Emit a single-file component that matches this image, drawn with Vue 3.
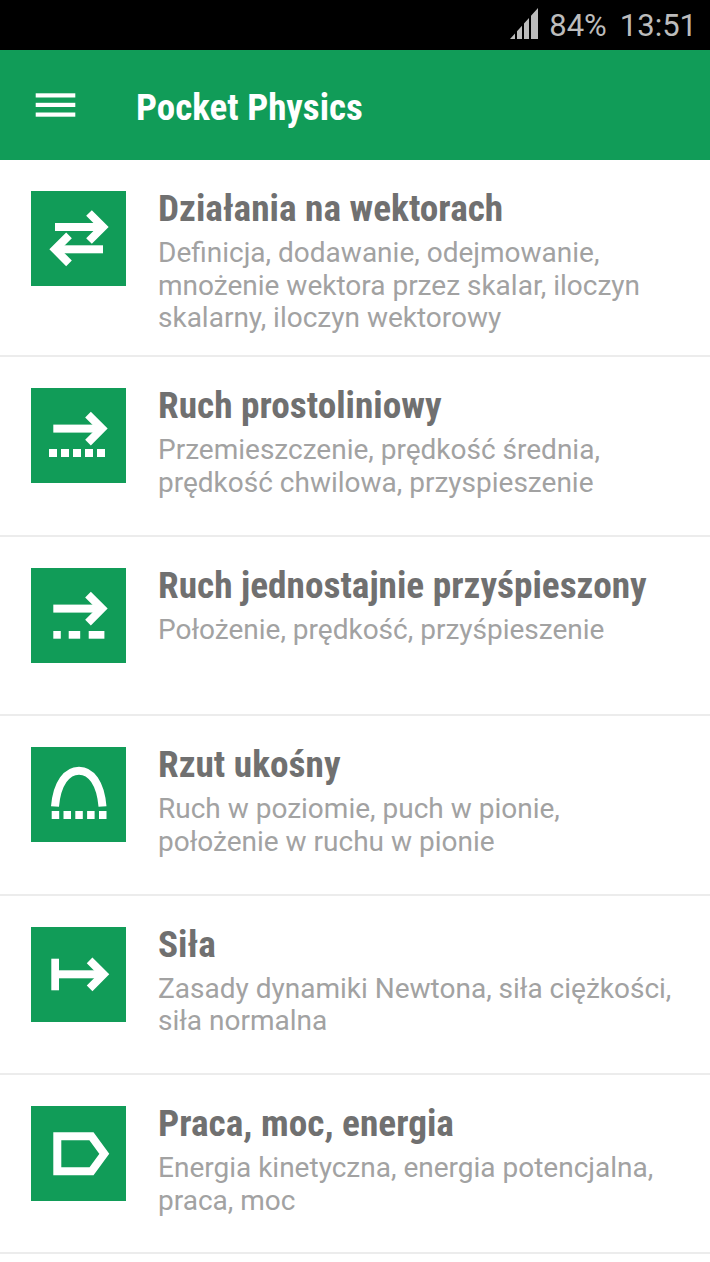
<script setup>
const topics = [
  { id: 'vectors', title: 'Działania na wektorach', text: ['Definicja, dodawanie, odejmowanie,', 'mnożenie wektora przez skalar, iloczyn', 'skalarny, iloczyn wektorowy'] },
  { id: 'linear', title: 'Ruch prostoliniowy', text: ['Przemieszczenie, prędkość średnia,', 'prędkość chwilowa, przyspieszenie'] },
  { id: 'accel', title: 'Ruch jednostajnie przyśpieszony', text: ['Położenie, prędkość, przyśpieszenie'] },
  { id: 'throw', title: 'Rzut ukośny', text: ['Ruch w poziomie, puch w pionie,', 'położenie w ruchu w pionie'] },
  { id: 'force', title: 'Siła', text: ['Zasady dynamiki Newtona, siła ciężkości,', 'siła normalna'] },
  { id: 'work', title: 'Praca, moc, energia', text: ['Energia kinetyczna, energia potencjalna,', 'praca, moc'] },
]
const dots = [18, 30, 42, 54, 66]
const throwDots = [20.7, 32.5, 44.3, 56.1, 68]
</script>

<template>
  <div class="screen">
    <div class="status">
      <svg class="signal" width="28" height="31" viewBox="0 0 28 31">
        <path d="M0 31 L5 25.5 V31Z M7 23.25 L12 17.7 V31 H7Z M14 15.5 L19 10 V31 H14Z M21 7.75 L28 0 V31 H21Z" fill="#bcbcbc" />
      </svg>
      <span class="battery">84%</span>
      <span class="clock">13:51</span>
    </div>
    <header class="toolbar">
      <svg class="menu" width="41" height="24" viewBox="0 0 41 24">
        <rect x="0.7" y="0.3" width="39.6" height="4.2" fill="#fff" />
        <rect x="0.7" y="9.8" width="39.6" height="4.2" fill="#fff" />
        <rect x="0.7" y="19.5" width="39.6" height="4.2" fill="#fff" />
      </svg>
      <h1>Pocket Physics</h1>
    </header>
    <ul class="list">
      <li v-for="t in topics" :key="t.id" class="row">
        <svg class="icon" width="95" height="95" viewBox="0 0 95 95">
          <rect width="95" height="95" fill="#119c58" />
          <g fill="#fff">
            <template v-if="t.id === 'vectors'">
              <rect x="24" y="32" width="46" height="8" />
              <rect x="26" y="54.3" width="46" height="8" />
            </template>
            <template v-if="t.id === 'linear' || t.id === 'accel'">
              <rect x="22.3" y="36.6" width="48" height="8" />
            </template>
            <template v-if="t.id === 'linear'">
              <rect v-for="x in dots" :key="x" :x="x" y="61" width="8" height="8" />
            </template>
            <template v-if="t.id === 'accel'">
              <rect x="22.3" y="63" width="7.5" height="7.7" />
              <rect x="37.7" y="63" width="11.5" height="7.7" />
              <rect x="57.7" y="63" width="15.7" height="7.7" />
            </template>
            <template v-if="t.id === 'throw'">
              <rect v-for="x in throwDots" :key="x" :x="x" y="64" width="7.5" height="8" />
            </template>
            <template v-if="t.id === 'force'">
              <rect x="20.3" y="31.7" width="7.7" height="31.6" />
              <rect x="26" y="43.3" width="46" height="8" />
            </template>
          </g>
          <g fill="none" stroke="#fff" stroke-width="8" stroke-miterlimit="4">
            <template v-if="t.id === 'vectors'">
              <path d="M58 22 L72 36 L58 50" />
              <path d="M38 44.3 L24 58.3 L38 72.3" />
            </template>
            <path v-if="t.id === 'linear' || t.id === 'accel'" d="M57 26.6 L71 40.6 L57 54.6" />
            <path v-if="t.id === 'throw'" d="M24 59.5 C26 36 36 23.7 48 23.7 C60 23.7 69.5 36 71.5 59.5" />
            <path v-if="t.id === 'force'" d="M58.6 33.3 L72.6 47.3 L58.6 61.3" />
            <path v-if="t.id === 'work'" d="M26.3 30.3 H60.5 L73.3 47.8 L60.5 65.3 H26.3Z" />
          </g>
        </svg>
        <div class="body">
          <h2>{{ t.title }}</h2>
          <p v-for="line in t.text" :key="line">{{ line }}</p>
        </div>
      </li>
    </ul>
  </div>
</template>

<style scoped>
.screen {
  width: 710px;
  height: 1262px;
  background: #fff;
  overflow: hidden;
  font-family: Roboto, sans-serif;
}

.status {
  height: 50px;
  box-sizing: border-box;
  background: #000;
  display: flex;
  justify-content: flex-end;
  align-items: center;
  padding-right: 13px;
  color: #bcbcbc;
  font-size: 31px;
}

.signal {
  margin: 0 11px 3px 0;
}

.battery {
  margin-right: 13px;
}

.toolbar {
  height: 110px;
  background: #119c58;
  display: flex;
  align-items: center;
  padding-left: 35px;
}

.menu {
  margin-right: 60px;
}

h1 {
  margin: 4px 0 0;
  color: #fff;
  font-size: 37px;
  font-weight: 700;
  font-stretch: 75%;
}

.list {
  list-style: none;
  margin: 0;
  padding: 0;
}

.row {
  box-sizing: border-box;
  min-height: 179.4px;
  display: flex;
  padding: 31px 0 20.6px 31px;
  border-bottom: 2px solid #ececec;
}

.icon {
  flex: none;
  margin-right: 32px;
}

.body {
  margin-top: -5px;
}

h2 {
  margin: 0 0 7px;
  color: #707070;
  font-size: 37.3px;
  line-height: 44px;
  font-weight: 700;
  font-stretch: 75%;
  white-space: nowrap;
}

p {
  margin: 0;
  color: #a2a2a2;
  font-size: 28px;
  line-height: 32.6px;
  white-space: nowrap;
}
</style>
